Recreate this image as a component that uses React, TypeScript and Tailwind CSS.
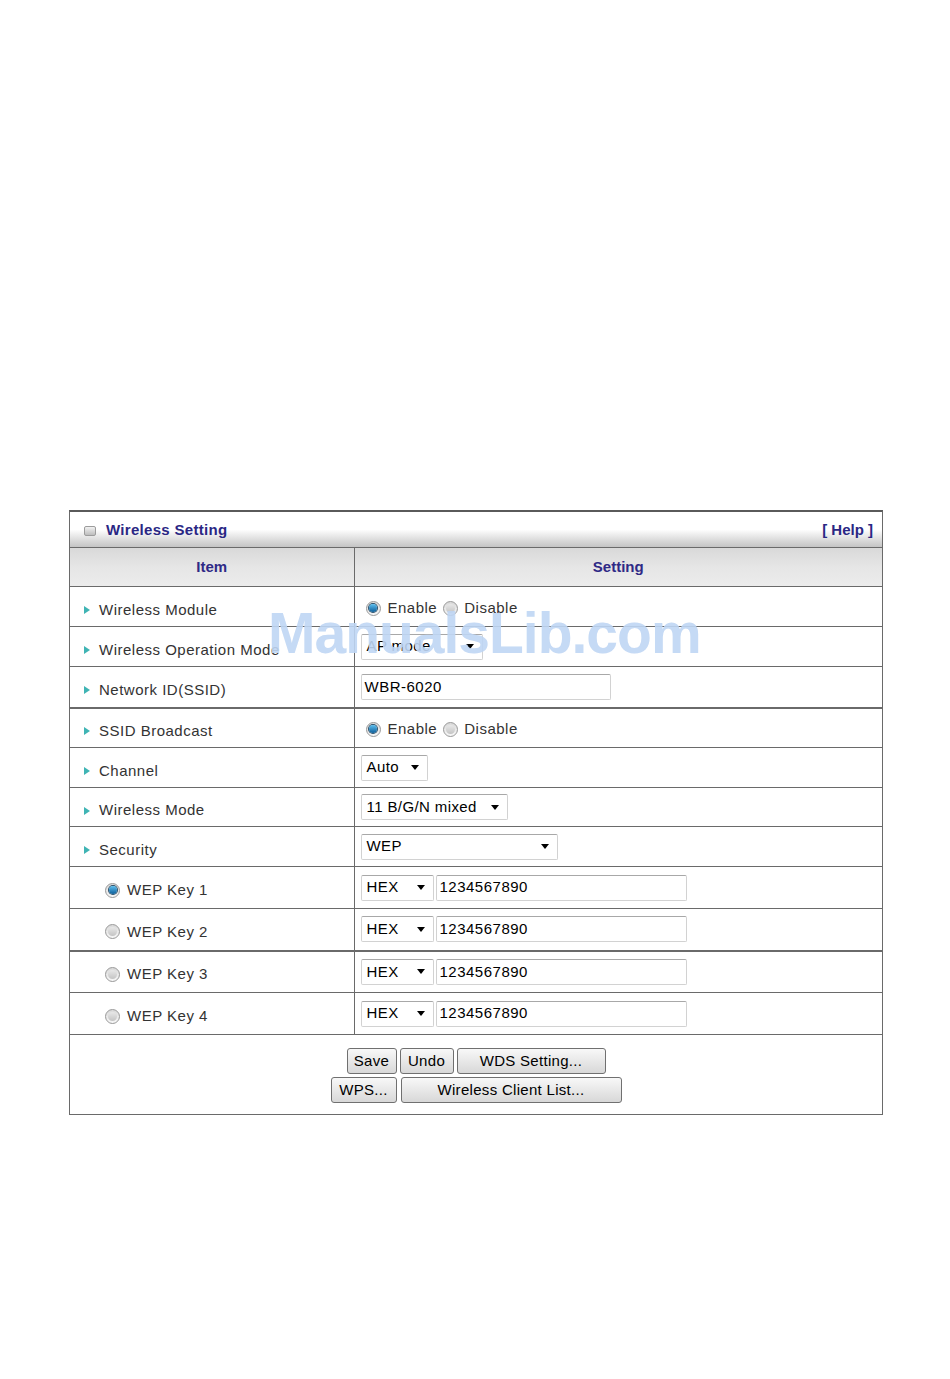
import React from "react";

const FONT = { fontFamily: '"Liberation Sans", Arial, sans-serif' };

function Arrow() {
  return (
    <span className="inline-block h-0 w-0 border-y-[4px] border-l-[6px] border-y-transparent border-l-[#3fb4b4]" />
  );
}

function Radio({ checked }: { checked?: boolean }) {
  return (
    <span className="relative inline-flex h-[15px] w-[15px] items-center justify-center rounded-full border border-[#9a9a9a] bg-gradient-to-b from-[#d9d9d9] to-[#f7f7f7]">
      {checked ? (
        <span className="h-[8px] w-[8px] rounded-full bg-gradient-to-b from-[#5cc0f0] to-[#0b5f9a] ring-1 ring-[#2a4f6a]" />
      ) : (
        <span className="h-[9px] w-[9px] rounded-full bg-gradient-to-b from-[#e8e8e8] to-[#c4c4c4]" />
      )}
    </span>
  );
}

function Select({ value, width }: { value: string; width: string }) {
  return (
    <div
      className={`flex h-[26px] items-center justify-between rounded-[2px] border border-[#d2d2d2] border-t-[#a8a8a8] bg-white pl-[5px] pr-[8px] text-[15px] tracking-[0.4px] text-black ${width}`}
    >
      <span>{value}</span>
      <span className="h-0 w-0 border-x-[4px] border-t-[5px] border-x-transparent border-t-black" />
    </div>
  );
}

function TextBox({ value, width }: { value: string; width: string }) {
  return (
    <div
      className={`flex h-[26px] items-center rounded-[2px] border border-[#d2d2d2] border-t-[#a8a8a8] bg-white pl-[3px] text-[15px] tracking-[0.5px] text-black ${width}`}
    >
      {value}
    </div>
  );
}

function EnableDisable() {
  return (
    <div className="flex items-center pl-[11px] pt-[3px] text-[15px] tracking-[0.5px] text-[#333]">
      <Radio checked />
      <span className="ml-[7px]">Enable</span>
      <span className="ml-[6px]">
        <Radio />
      </span>
      <span className="ml-[6px]">Disable</span>
    </div>
  );
}

function Btn({ label, width }: { label: string; width: string }) {
  return (
    <div
      className={`flex h-[26px] items-center justify-center rounded-[3px] border border-[#707070] bg-gradient-to-b from-[#f8f8f8] to-[#d8d8d8] text-[15px] tracking-[0.3px] text-black ${width}`}
    >
      {label}
    </div>
  );
}

type Row = { label: string; h: string; thick?: boolean; control: React.ReactNode };

const rows: Row[] = [
  { label: "Wireless Module", h: "h-[40px]", control: <EnableDisable /> },
  {
    label: "Wireless Operation Mode",
    h: "h-[40px]",
    control: (
      <div className="pl-[6px]">
        <Select value="AP mode" width="w-[122px]" />
      </div>
    ),
  },
  {
    label: "Network ID(SSID)",
    h: "h-[41px]",
    thick: true,
    control: (
      <div className="pl-[6px]">
        <TextBox value="WBR-6020" width="w-[250px]" />
      </div>
    ),
  },
  { label: "SSID Broadcast", h: "h-[40px]", control: <EnableDisable /> },
  {
    label: "Channel",
    h: "h-[40px]",
    control: (
      <div className="pl-[6px]">
        <Select value="Auto" width="w-[67px]" />
      </div>
    ),
  },
  {
    label: "Wireless Mode",
    h: "h-[39px]",
    control: (
      <div className="pl-[6px]">
        <Select value="11 B/G/N mixed" width="w-[147px]" />
      </div>
    ),
  },
  {
    label: "Security",
    h: "h-[40px]",
    control: (
      <div className="pl-[6px]">
        <Select value="WEP" width="w-[197px]" />
      </div>
    ),
  },
];

const wepKeys = [1, 2, 3, 4];

export default function App() {
  return (
    <div className="min-h-[1379px] w-[950px] bg-white pl-[69px] pt-[510px]" style={FONT}>
      <div className="relative w-[814px]">
        <div className="border border-t-2 border-[#6a6a6a] border-t-[#5a5a5a]">
          {/* title bar */}
          <div className="flex h-[35px] items-center justify-between bg-gradient-to-b from-white via-white to-[#c4c4c4] pl-[14px] pr-[9px] pt-[2px]">
            <div className="flex items-center">
              <span className="h-[10px] w-[12px] rounded-[2px] border border-[#9c9c9c] bg-gradient-to-b from-[#f2f2f2] to-[#bdbdbd]" />
              <span className="ml-[10px] text-[15px] font-bold tracking-[0.3px] text-[#2a2784]">Wireless Setting</span>
            </div>
            <span className="text-[15px] font-bold text-[#2a2784]">[ Help ]</span>
          </div>

          <table className="w-full border-collapse text-[15px]">
            <thead>
              <tr className="h-[39px] bg-gradient-to-b from-[#d9d9d9] via-[#e6e6e6] to-[#ececec]">
                <th className="w-[284px] border border-l-0 border-[#6a6a6a] font-bold text-[#2f2a86]">Item</th>
                <th className="border border-r-0 border-[#6a6a6a] font-bold text-[#2f2a86]">Setting</th>
              </tr>
            </thead>
            <tbody>
              {rows.map((row) => (
                <tr key={row.label} className={row.h}>
                  <td
                    className={`border-l-0 border-t border-r border-[#6a6a6a] pl-[14px] pt-[7px] tracking-[0.5px] text-[#333] ${
                      row.thick ? "border-b-2" : "border-b"
                    }`}
                  >
                    <div className="flex items-center">
                      <Arrow />
                      <span className="ml-[9px] whitespace-nowrap">{row.label}</span>
                    </div>
                  </td>
                  <td
                    className={`border-r-0 border-t border-l border-[#6a6a6a] ${
                      row.thick ? "border-b-2" : "border-b"
                    }`}
                  >
                    {row.control}
                  </td>
                </tr>
              ))}
              {wepKeys.map((k) => (
                <tr key={k} className="h-[42px]">
                  <td
                    className={`border-l-0 border-t border-r border-[#6a6a6a] pl-[35px] pt-[5px] tracking-[0.5px] text-[#333] ${
                      k === 2 ? "border-b-2" : "border-b"
                    }`}
                  >
                    <div className="flex items-center">
                      <Radio checked={k === 1} />
                      <span className="ml-[7px]">WEP Key {k}</span>
                    </div>
                  </td>
                  <td
                    className={`border-r-0 border-t border-l border-[#6a6a6a] ${
                      k === 2 ? "border-b-2" : "border-b"
                    }`}
                  >
                    <div className="flex items-center gap-[2px] pl-[6px]">
                      <Select value="HEX" width="w-[73px]" />
                      <TextBox value="1234567890" width="w-[251px]" />
                    </div>
                  </td>
                </tr>
              ))}
            </tbody>
          </table>

          {/* buttons */}
          <div className="flex h-[79px] flex-col items-center pt-[13px]">
            <div className="flex gap-[3px]">
              <Btn label="Save" width="w-[50px]" />
              <Btn label="Undo" width="w-[54px]" />
              <Btn label="WDS Setting..." width="w-[149px]" />
            </div>
            <div className="mt-[3px] flex gap-[4px]">
              <Btn label="WPS..." width="w-[66px]" />
              <Btn label="Wireless Client List..." width="w-[221px]" />
            </div>
          </div>
        </div>

        {/* watermark */}
        <div className="pointer-events-none absolute left-[199px] top-[95px] text-[57px] font-bold leading-none tracking-[-1px] text-[#bfd6f4] opacity-90">
          ManualsLib.com
        </div>
      </div>
    </div>
  );
}
